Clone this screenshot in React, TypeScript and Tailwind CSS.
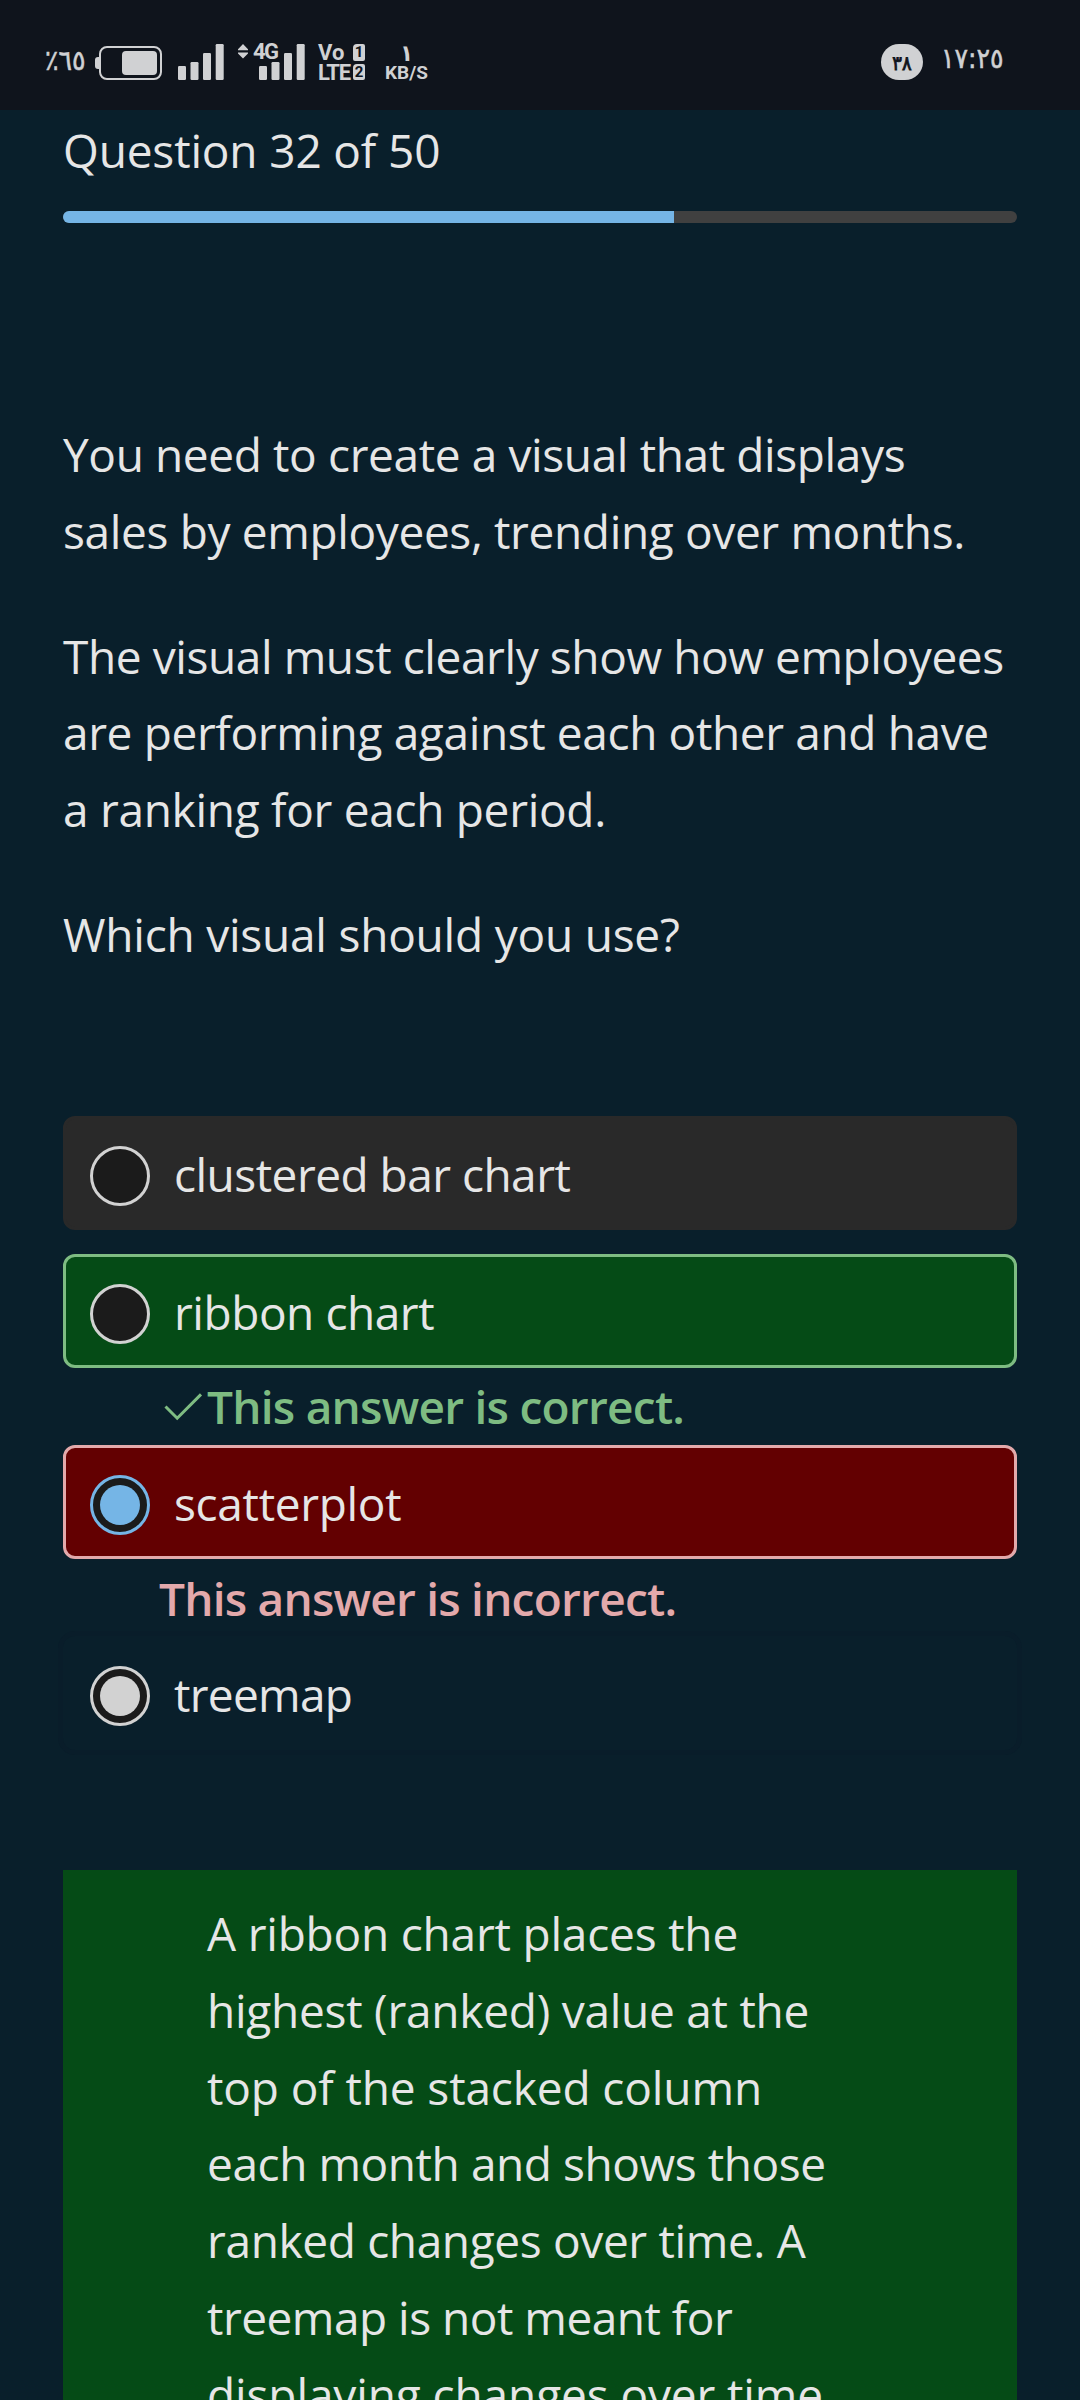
import React from "react";

type Line = { text: string; tracking: string };

const question: Line[][] = [
  [
    { text: "You need to create a visual that displays", tracking: "tracking-[-0.38px]" },
    { text: "sales by employees, trending over months.", tracking: "tracking-[-0.36px]" },
  ],
  [
    { text: "The visual must clearly show how employees", tracking: "tracking-[-0.41px]" },
    { text: "are performing against each other and have", tracking: "tracking-[-0.37px]" },
    { text: "a ranking for each period.", tracking: "tracking-[-0.3px]" },
  ],
  [{ text: "Which visual should you use?", tracking: "tracking-[-0.22px]" }],
];

const explanation: Line[] = [
  { text: "A ribbon chart places the", tracking: "tracking-[-0.2px]" },
  { text: "highest (ranked) value at the", tracking: "tracking-[-0.25px]" },
  { text: "top of the stacked column", tracking: "tracking-[-0.12px]" },
  { text: "each month and shows those", tracking: "tracking-[-0.43px]" },
  { text: "ranked changes over time. A", tracking: "tracking-[-0.36px]" },
  { text: "treemap is not meant for", tracking: "tracking-[-0.5px]" },
  { text: "displaying changes over time", tracking: "tracking-[-0.11px]" },
];

function TextLine({ line }: { line: Line }) {
  return <span className={`block whitespace-nowrap ${line.tracking}`}>{line.text}</span>;
}

function Battery() {
  return (
    <svg className="ml-[7px] h-[34px] w-[67px]" viewBox="0 0 67 34" fill="none">
      <path d="M4 11H3a3 3 0 0 0-3 3v6a3 3 0 0 0 3 3h1z" fill="#d0d1d3" />
      <rect x="5" y="1" width="61" height="32" rx="7" stroke="#d0d1d3" strokeWidth="2" />
      <rect x="27" y="5" width="35" height="24" rx="4" fill="#d0d1d3" />
    </svg>
  );
}

function Bars({ className }: { className: string }) {
  return (
    <svg className={className} viewBox="0 0 46 36" fill="#d0d1d3">
      <rect x="0" y="22" width="8" height="14" rx="1.2" />
      <rect x="12.5" y="18" width="8" height="18" rx="1.2" />
      <rect x="25" y="9" width="8" height="27" rx="1.2" />
      <rect x="37.7" y="0" width="8" height="36" rx="1.2" />
    </svg>
  );
}

function SimBadge({ n, h }: { n: string; h: string }) {
  return (
    <span
      className={`${h} flex w-[12px] items-center justify-center rounded-[2px] rounded-tl-[4px] bg-[#d0d1d3] font-['Roboto',sans-serif] text-[15px] font-bold leading-none text-[#0f141c]`}
    >
      {n}
    </span>
  );
}

function StatusBar() {
  return (
    <div className="flex h-[110px] shrink-0 items-start bg-[#0f141c] pl-[45px] pt-[44px] text-[#d0d1d3]">
      <bdo
        dir="ltr"
        className="mt-[2px] block w-[43px] whitespace-nowrap font-['DejaVu_Sans_Condensed','DejaVu_Sans',sans-serif] text-[28px] leading-[30px] tracking-[-0.5px] [-webkit-text-stroke:0.5px_#d0d1d3]"
      >
        ٪٦٥
      </bdo>
      <div className="mt-[2px]">
        <Battery />
      </div>
      <Bars className="ml-[16px] h-[36px] w-[46px]" />
      <div className="relative ml-[14px] h-[36px] w-[67px]">
        <svg className="h-[15px] w-[10px]" viewBox="0 0 10 15" fill="#d0d1d3">
          <path d="M5 0l5 5.2v1H0v-1zM0 8.6h10v1L5 14.6 0 9.600z" />
        </svg>
        <span className="absolute left-[15px] top-[-4px] font-['Roboto',sans-serif] text-[22px] font-bold leading-[24px] tracking-[-1.5px]">
          4G
        </span>
        <Bars className="absolute left-[21px] top-0 h-[36px] w-[46px]" />
      </div>
      <div className="ml-[13px] w-[47px] font-['Roboto',sans-serif] text-[22px] font-bold">
        <div className="flex h-[17px] justify-between">
          <span className="leading-[17px]">Vo</span>
          <SimBadge n="1" h="h-[17px]" />
        </div>
        <div className="mt-[3px] flex h-[16px] justify-between">
          <span className="leading-[17px] tracking-[-1.2px]">LTE</span>
          <SimBadge n="2" h="h-[16px]" />
        </div>
      </div>
      <div className="ml-[20px] flex w-[43px] flex-col items-center font-bold">
        <span className="mt-[-3px] h-[20px] font-['DejaVu_Sans_Condensed','DejaVu_Sans',sans-serif] text-[23px] leading-[24px]">١</span>
        <span className="font-['Roboto',sans-serif] text-[19px] leading-[24px]">KB/S</span>
      </div>
      <div className="ml-[453px] flex h-[36px] w-[42px] items-center justify-center rounded-[18px] bg-[#d0d1d3] pt-[2px] font-['DejaVu_Sans_Condensed','DejaVu_Sans',sans-serif] text-[20px] leading-none text-[#0f141c] [-webkit-text-stroke:0.8px_#0f141c]">
        <bdo dir="ltr">٣٨</bdo>
      </div>
      <bdo
        dir="ltr"
        className="ml-[18px] mt-[-2px] block whitespace-nowrap font-['DejaVu_Sans_Condensed','DejaVu_Sans',sans-serif] text-[28px] leading-[34px] [-webkit-text-stroke:0.5px_#d0d1d3]"
      >
        ١٧:٢٥
      </bdo>
    </div>
  );
}

function Radio({ ring, dot }: { ring: string; dot?: string }) {
  return (
    <span className={`flex size-[60px] shrink-0 items-center justify-center rounded-full border-3 bg-[#1b1b1b] ${ring}`}>
      {dot && <span className={`size-[40px] rounded-full ${dot}`} />}
    </span>
  );
}

function Option({ line, box, ring, dot }: { line: Line; box: string; ring: string; dot?: string }) {
  return (
    <div className={`flex h-[114px] items-center rounded-[12px] border-3 pl-[24px] pt-[6px] ${box}`}>
      <Radio ring={ring} dot={dot} />
      <span className={`ml-[24px] pb-[3px] ${line.tracking}`}>{line.text}</span>
    </div>
  );
}

export default function App() {
  return (
    <div className="flex h-[2400px] w-[1080px] flex-col overflow-hidden bg-[#091f2b] font-['Open_Sans','Noto_Sans',sans-serif] text-[46px] leading-[76.8px] text-[#e6e6e6]">
      <StatusBar />
      <main className="flex min-h-0 flex-1 flex-col px-[63px]">
        <div className="h-[101px] shrink-0 pt-[2px] tracking-[-0.15px]">Question 32 of 50</div>
        <div className="h-[12px] shrink-0 overflow-hidden rounded-full bg-[#404040]">
          <div className="h-full w-[64%] bg-[#75b5e6]" />
        </div>
        <div className="mt-[193px] flex h-[700px] shrink-0 flex-col gap-[48px]">
          {question.map((p, i) => (
            <p key={i}>
              {p.map((l) => (
                <TextLine key={l.text} line={l} />
              ))}
            </p>
          ))}
        </div>
        <div className="shrink-0">
          <Option
            line={{ text: "clustered bar chart", tracking: "tracking-[-0.52px]" }}
            box="border-[#292929] bg-[#292929]"
            ring="border-[#d2d2d2]"
          />
          <div className="h-[24px]" />
          <Option
            line={{ text: "ribbon chart", tracking: "tracking-[-0.45px]" }}
            box="border-[#7ebc82] bg-[#054b16]"
            ring="border-[#d2d2d2]"
          />
          <div className="flex h-[77px] items-center pl-[101px] font-semibold tracking-[-0.75px] text-[#7ebc82]">
            <svg className="mr-[4px] h-[30px] w-[39px]" viewBox="0 0 39 30" fill="none">
              <path d="M1.500 14.500L13.200 26.200L37 2.400" stroke="#7ebc82" strokeWidth="3" />
            </svg>
            <span>This answer is correct.</span>
          </div>
          <Option
            line={{ text: "scatterplot", tracking: "tracking-[-0.32px]" }}
            box="border-[#e3a9ab] bg-[#630001]"
            ring="border-[#75b5e6]"
            dot="bg-[#75b5e6]"
          />
          <div className="h-[77px] pl-[96px] pt-px font-semibold tracking-[-0.77px] text-[#e3a9ab]">
            This answer is incorrect.
          </div>
          <Option
            line={{ text: "treemap", tracking: "tracking-[-0.7px]" }}
            box="border-transparent outline-5 outline-[#091d2a]"
            ring="border-[#d2d2d2]"
            dot="bg-[#d2d2d2]"
          />
        </div>
        <div className="mt-[120px] min-h-0 flex-1 overflow-hidden bg-[#054b16] pl-[144px] pt-[25px]">
          <p>
            {explanation.map((l) => (
              <TextLine key={l.text} line={l} />
            ))}
          </p>
        </div>
      </main>
    </div>
  );
}
